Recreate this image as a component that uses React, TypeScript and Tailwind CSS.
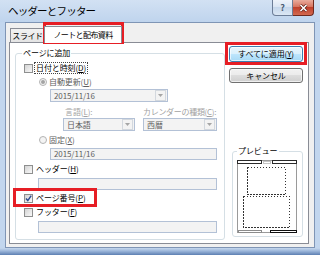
import React from "react";

const U = ({ c }: { c: string }) => (
  <span className="underline decoration-[1px] underline-offset-[1px]">{c}</span>
);

function Check({ checked }: { checked?: boolean }) {
  return (
    <div className="relative w-[9px] h-[9px] shrink-0 border border-[#8e8f8f] bg-[linear-gradient(135deg,#d3d3d3,#f9f9f9)]">
      {checked && (
        <svg viewBox="0 0 9 9" className="absolute -left-px -top-px w-[9px] h-[9px]">
          <path d="M2 4.6 L3.8 6.6 L7.2 1.6" fill="none" stroke="#2f4d92" strokeWidth="1.5" />
        </svg>
      )}
    </div>
  );
}

function Radio({ on }: { on?: boolean }) {
  return (
    <div className="w-[8px] h-[8px] shrink-0 rounded-full border border-[#b3b3b3] bg-[#f4f4f4] flex items-center justify-center">
      {on && <div className="w-[4px] h-[4px] rounded-full bg-[#a3a3a3]" />}
    </div>
  );
}

function Arrow() {
  return (
    <div className="w-[11px] h-[11px] my-auto mr-px border border-[#d3d8de] bg-[#f3f3f3] flex items-center justify-center shrink-0">
      <svg width="5" height="3" viewBox="0 0 5 3">
        <path d="M0 0h5L2.5 3z" fill="#a5a5a5" />
      </svg>
    </div>
  );
}

export default function App() {
  return (
    <div className="w-[320px] h-[255px] overflow-hidden relative flex flex-col bg-[#c2d6ee] text-black font-['Noto_Sans_CJK_JP','Noto_Sans_CJK_SC',sans-serif]">
      {/* title bar */}
      <div className="h-[22px] shrink-0 flex items-start bg-[linear-gradient(180deg,#d2e1f3,#bfd4ed)]">
        <div className="pl-[8px] pt-[6px] text-[10.5px] leading-none tracking-[-0.8px]">ヘッダーとフッター</div>
        <div className="ml-auto mr-[6px] flex">
          <div className="w-[21px] h-[16px] border border-t-0 border-[#6c7d97] rounded-bl-[4px] bg-[linear-gradient(180deg,#eef3fa,#d9e4f2_50%,#c6d7eb_50%,#dbe7f4)] flex items-center justify-center text-[9px] font-bold leading-none text-[#4a5a72]">
            ?
          </div>
          <div className="w-[21px] h-[16px] border border-t-0 border-l-0 border-[#6f2a1f] rounded-br-[4px] bg-[linear-gradient(180deg,#e9ab9c,#d56f5a_50%,#c0402c_50%,#d3694f)] flex items-center justify-center">
            <svg width="9" height="8" viewBox="0 0 9 8">
              <path d="M1.5 1 L7.5 7 M7.5 1 L1.5 7" stroke="#5a1e16" strokeWidth="3" />
              <path d="M1.5 1 L7.5 7 M7.5 1 L1.5 7" stroke="#ffffff" strokeWidth="1.6" />
            </svg>
          </div>
        </div>
      </div>

      {/* client area */}
      <div className="mx-[5px] h-[226px] shrink-0 border border-[#7f95b5] bg-[#f0f0f0] flex flex-col text-[8px] leading-none tracking-[-0.1px]">
        {/* tab strip */}
        <div className="h-[19px] shrink-0 flex items-end pl-[4px]">
          <div className="w-[35px] h-[14px] border border-b-0 border-[#898c95] bg-[linear-gradient(180deg,#f2f2f2,#e4e4e4)] flex items-center justify-center tracking-[-0.4px]">
            スライド
          </div>
          <div className="relative z-10 -mb-px -ml-px w-[78px] h-[17px] border border-b-0 border-[#898c95] bg-white flex items-center justify-center tracking-[-0.6px]">
            ノートと配布資料
          </div>
        </div>

        {/* tab panel */}
        <div className="ml-[3px] w-[300px] h-[202px] border border-[#898c95] bg-white flex items-start">
          {/* group ページに追加 */}
          <div className="relative ml-[5px] mt-[10px] w-[210px] h-[187px] border border-[#d5dfe5] rounded-[3px] flex flex-col">
            <div className="absolute -top-[5px] left-[6px] bg-white px-[1px]">ページに追加</div>

            <div className="mt-[8px] h-[12px] pl-[8px] flex items-center gap-[1px]">
              <Check />
              <span className="px-[1px] py-[1px] border border-dotted border-[#444]">日付と時刻(<U c="D" />)</span>
            </div>
            <div className="mt-[2px] h-[12px] pl-[23px] flex items-center gap-[2px] text-[#5e5e5e]">
              <Radio on />
              <span>自動更新(<U c="U" />)</span>
            </div>
            <div className="mt-[1px] ml-[34px] w-[118px] h-[13px] border border-[#b3c1d6] bg-[#f3f3f3] flex items-center text-[#5e5e5e]">
              <span className="pl-[3px] flex-1">2015/11/16</span>
              <Arrow />
            </div>
            <div className="mt-[4px] h-[12px] ml-[47px] flex items-center text-[#a2a2a2]">
              <span className="w-[80px] pl-[2px]">言語(<U c="L" />):</span>
              <span className="w-[76px] whitespace-nowrap tracking-[-0.3px]">カレンダーの種類(<U c="C" />):</span>
            </div>
            <div className="h-[13px] ml-[47px] flex text-[#5e5e5e]">
              <div className="w-[72px] h-[13px] border border-[#b3c1d6] bg-[#f3f3f3] flex items-center">
                <span className="pl-[3px] flex-1">日本語</span>
                <Arrow />
              </div>
              <div className="ml-[8px] w-[74px] h-[13px] border border-[#b3c1d6] bg-[#f3f3f3] flex items-center">
                <span className="pl-[3px] flex-1">西暦</span>
                <Arrow />
              </div>
            </div>
            <div className="mt-[3px] h-[12px] pl-[23px] flex items-center gap-[2px] text-[#5e5e5e]">
              <Radio />
              <span>固定(<U c="X" />)</span>
            </div>
            <div className="mt-[2px] ml-[34px] w-[167px] h-[12px] border border-[#b3c1d6] bg-[#f3f3f3] flex items-center text-[#5e5e5e]">
              <span className="pl-[3px]">2015/11/16</span>
            </div>
            <div className="mt-[3px] h-[12px] pl-[8px] flex items-center gap-[3px]">
              <Check />
              <span>ヘッダー(<U c="H" />)</span>
            </div>
            <div className="mt-[3px] ml-[22px] w-[179px] h-[12px] border border-[#b3c1d6] bg-[#f3f3f3]" />
            <div className="mt-[2px] h-[12px] pl-[8px] flex items-center gap-[3px]">
              <Check checked />
              <span>ページ番号(<U c="P" />)</span>
            </div>
            <div className="mt-[2px] h-[12px] pl-[8px] flex items-center gap-[3px]">
              <Check />
              <span>フッター(<U c="F" />)</span>
            </div>
            <div className="mt-[3px] ml-[22px] w-[179px] h-[12px] border border-[#b3c1d6] bg-[#f3f3f3]" />
          </div>

          {/* right column */}
          <div className="ml-[4px] mt-[3px] w-[74px] flex flex-col">
            <div className="h-[16px] rounded-[3px] border border-[#3c7fb1] bg-[linear-gradient(180deg,#eaf6fd,#d9f0fc_50%,#bee6fd_50%,#a7d9f5)] shadow-[inset_0_0_0_1px_#ffffffaa] flex items-center justify-center">
              すべてに適用(<U c="Y" />)
            </div>
            <div className="mt-[6px] h-[15px] rounded-[3px] border border-[#707070] bg-[linear-gradient(180deg,#f2f2f2,#ebebeb_50%,#dddddd_50%,#cfcfcf)] shadow-[inset_0_0_0_1px_#ffffffaa] flex items-center justify-center">
              キャンセル
            </div>
            <div className="relative mt-[68px] ml-[3px] w-[71px] h-[86px] border border-[#d5dfe5] rounded-[3px]">
              <div className="absolute -top-[5px] left-[4px] bg-white px-[1px]">プレビュー</div>
              <svg width="62" height="76" viewBox="0 0 62 76" className="ml-[3px] mt-[7px]" shapeRendering="crispEdges">
                <rect x="1.5" y="1.5" width="59" height="72" fill="#ffffff" stroke="#9a9a9a" />
                <rect x="1.5" y="1.5" width="24" height="3" fill="#ffffff" stroke="#2a2a2a" />
                <rect x="36.5" y="1.5" width="24" height="3" fill="#ffffff" stroke="#2a2a2a" />
                <rect x="27.5" y="2.5" width="7" height="2" fill="#ffffff" stroke="#c4c4c4" />
                <rect x="11.5" y="8.5" width="38" height="27" fill="none" stroke="#333" strokeDasharray="1.5 1.5" />
                <rect x="7.5" y="37.5" width="46" height="31" fill="none" stroke="#333" strokeDasharray="1.5 1.5" />
                <rect x="2.5" y="71.5" width="23" height="2" fill="#ffffff" stroke="#8c8c8c" />
                <rect x="34.5" y="71.5" width="26" height="2" fill="#ffffff" stroke="#111" strokeWidth="1.4" />
              </svg>
            </div>
          </div>
        </div>
      </div>

      {/* bottom frame */}
      <div className="flex-1 bg-[linear-gradient(180deg,#c6d8ee,#9fb9dc_40%,#5d7fb2)]" />

      {/* red annotation boxes */}
      <div className="absolute left-[43px] top-[22px] w-[81px] h-[22px] border-[3px] border-[#e61e25]" />
      <div className="absolute left-[225px] top-[42px] w-[82px] h-[23px] border-[3px] border-[#e61e25]" />
      <div className="absolute left-[13px] top-[188px] w-[84px] h-[19px] border-[3px] border-[#e61e25]" />
    </div>
  );
}
